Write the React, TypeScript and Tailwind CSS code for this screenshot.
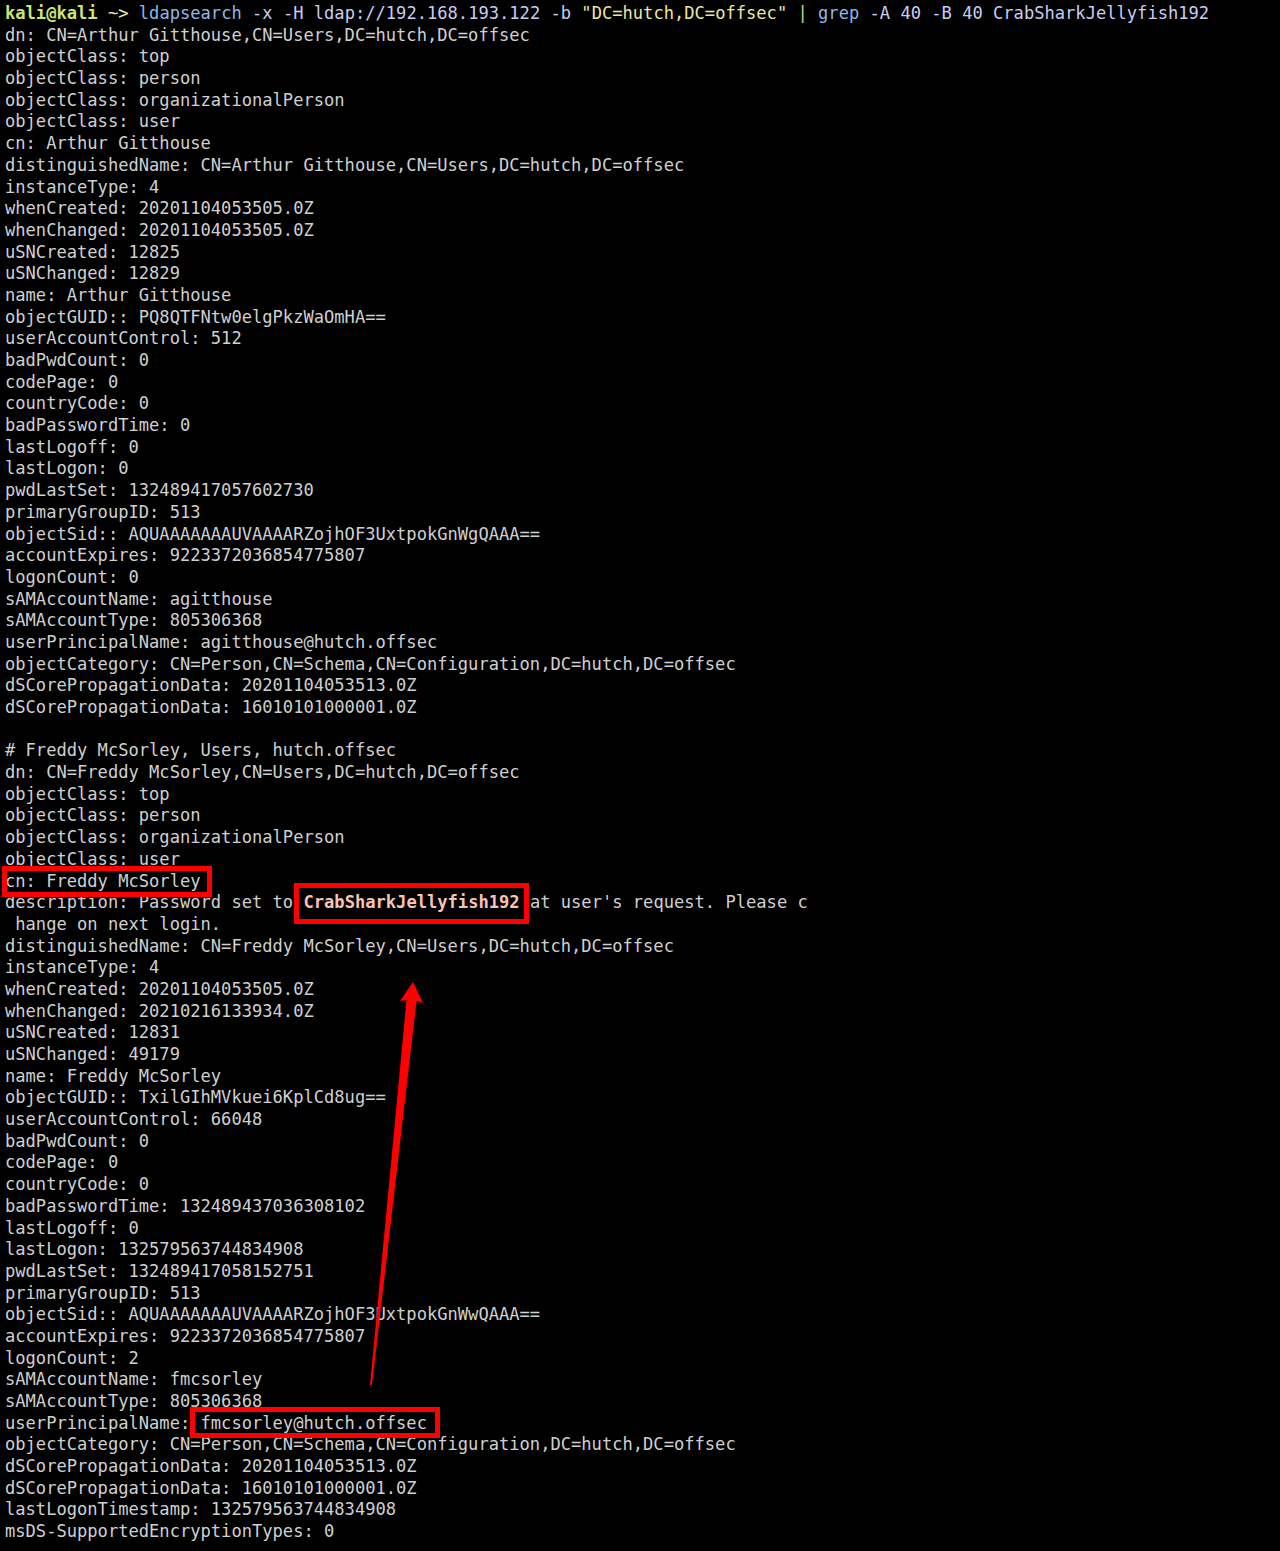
import React from 'react';

const lines: string[] = [
  '', // prompt line rendered separately
  'dn: CN=Arthur Gitthouse,CN=Users,DC=hutch,DC=offsec',
  'objectClass: top',
  'objectClass: person',
  'objectClass: organizationalPerson',
  'objectClass: user',
  'cn: Arthur Gitthouse',
  'distinguishedName: CN=Arthur Gitthouse,CN=Users,DC=hutch,DC=offsec',
  'instanceType: 4',
  'whenCreated: 20201104053505.0Z',
  'whenChanged: 20201104053505.0Z',
  'uSNCreated: 12825',
  'uSNChanged: 12829',
  'name: Arthur Gitthouse',
  'objectGUID:: PQ8QTFNtw0elgPkzWaOmHA==',
  'userAccountControl: 512',
  'badPwdCount: 0',
  'codePage: 0',
  'countryCode: 0',
  'badPasswordTime: 0',
  'lastLogoff: 0',
  'lastLogon: 0',
  'pwdLastSet: 132489417057602730',
  'primaryGroupID: 513',
  'objectSid:: AQUAAAAAAAUVAAAARZojhOF3UxtpokGnWgQAAA==',
  'accountExpires: 9223372036854775807',
  'logonCount: 0',
  'sAMAccountName: agitthouse',
  'sAMAccountType: 805306368',
  'userPrincipalName: agitthouse@hutch.offsec',
  'objectCategory: CN=Person,CN=Schema,CN=Configuration,DC=hutch,DC=offsec',
  'dSCorePropagationData: 20201104053513.0Z',
  'dSCorePropagationData: 16010101000001.0Z',
  '',
  '# Freddy McSorley, Users, hutch.offsec',
  'dn: CN=Freddy McSorley,CN=Users,DC=hutch,DC=offsec',
  'objectClass: top',
  'objectClass: person',
  'objectClass: organizationalPerson',
  'objectClass: user',
  'cn: Freddy McSorley',
  '', // description line rendered separately
  ' hange on next login.',
  'distinguishedName: CN=Freddy McSorley,CN=Users,DC=hutch,DC=offsec',
  'instanceType: 4',
  'whenCreated: 20201104053505.0Z',
  'whenChanged: 20210216133934.0Z',
  'uSNCreated: 12831',
  'uSNChanged: 49179',
  'name: Freddy McSorley',
  'objectGUID:: TxilGIhMVkuei6KplCd8ug==',
  'userAccountControl: 66048',
  'badPwdCount: 0',
  'codePage: 0',
  'countryCode: 0',
  'badPasswordTime: 132489437036308102',
  'lastLogoff: 0',
  'lastLogon: 132579563744834908',
  'pwdLastSet: 132489417058152751',
  'primaryGroupID: 513',
  'objectSid:: AQUAAAAAAAUVAAAARZojhOF3UxtpokGnWwQAAA==',
  'accountExpires: 9223372036854775807',
  'logonCount: 2',
  'sAMAccountName: fmcsorley',
  'sAMAccountType: 805306368',
  'userPrincipalName: fmcsorley@hutch.offsec',
  'objectCategory: CN=Person,CN=Schema,CN=Configuration,DC=hutch,DC=offsec',
  'dSCorePropagationData: 20201104053513.0Z',
  'dSCorePropagationData: 16010101000001.0Z',
  'lastLogonTimestamp: 132579563744834908',
  'msDS-SupportedEncryptionTypes: 0',
];

function PromptLine() {
  return (
    <div className="h-[21.7px] whitespace-pre">
      <span className="font-bold text-[#cde56f]">kali@kali</span>
      <span className="text-[#ecebb0]"> ~&gt; </span>
      <span className="text-[#8fb8e6]">ldapsearch</span>
      <span className="text-[#c9cdf2]"> -x -H ldap://192.168.193.122 -b </span>
      <span className="text-[#ece6a6]">"DC=hutch,DC=offsec"</span>
      <span className="text-[#b6e07a]"> | </span>
      <span className="text-[#8fb8e6]">grep</span>
      <span className="text-[#c9cdf2]"> -A 40 -B 40 CrabSharkJellyfish192</span>
    </div>
  );
}

function DescriptionLine() {
  return (
    <div className="h-[21.7px] whitespace-pre">
      description: Password set to{' '}
      <span className="font-bold text-[#f9c3b4]">CrabSharkJellyfish192</span>
      {" at user's request. Please c"}
    </div>
  );
}

export default function App() {
  return (
    <div className="relative h-[1551px] w-[1280px] overflow-hidden bg-black">
      <div
        className="pl-[5px] pt-[3px] text-[17.1px] leading-[21.7px] text-[#d0d0d0]"
        style={{ fontFamily: '"DejaVu Sans Mono", "Liberation Mono", monospace' }}
      >
        {lines.map((l, i) => {
          if (i === 0) return <PromptLine key={i} />;
          if (i === 41) return <DescriptionLine key={i} />;
          return (
            <div key={i} className="h-[21.7px] whitespace-pre">
              {l}
            </div>
          );
        })}
      </div>

      {/* annotation boxes */}
      <div className="absolute left-[2px] top-[866px] h-[31px] w-[210px] border-[5px] border-[#ff0000]" />
      <div className="absolute left-[294px] top-[883px] h-[41px] w-[235px] border-[5px] border-[#ff0000]" />
      <div className="absolute left-[190px] top-[1407px] h-[31px] w-[250px] border-[5px] border-[#ff0000]" />

      {/* arrow */}
      <svg className="absolute left-0 top-0" width="1280" height="1551" viewBox="0 0 1280 1551">
        <polygon
          points="370,1385 406.5,1000 400,1001 413,982 423,1003 416.5,1001 372,1385"
          fill="#ff0000"
          strokeLinejoin="round"
        />
      </svg>
    </div>
  );
}
